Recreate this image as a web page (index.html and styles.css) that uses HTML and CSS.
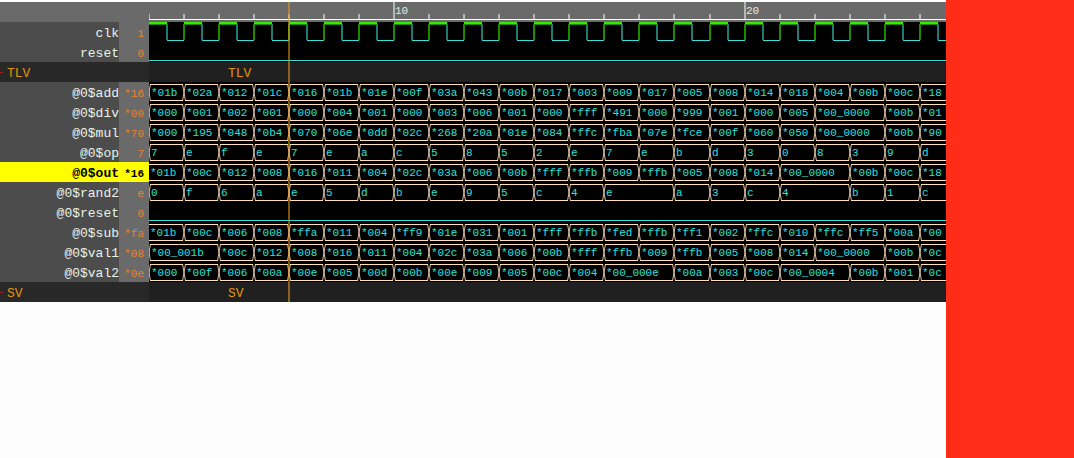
FILE: index.html
```html
<!DOCTYPE html>
<html lang="en">
<head>
<meta charset="utf-8">
<title>Waveform viewer</title>
<link rel="stylesheet" href="styles.css">
</head>
<body>
<main class="viewer">
  <section class="panel" id="panel">
    <div class="row row-scale">
      <div class="corner"></div>
      <div class="wave" id="scale"></div>
    </div>
  </section>
</main>
<aside class="side"></aside>
<script src="waves.js"></script>
</body>
</html>
```

FILE: styles.css
```css
body {
  margin: 0;
  min-height: 100vh;
  display: flex;
  background: #fdfdfd;
  font-family: "Courier New", "Liberation Mono", monospace;
}

.viewer {
  flex: 1;
  min-width: 0;
  padding-top: 2px;
}

.side {
  flex: 0 0 128px;
  background: #ff2c18;
}

.panel {
  position: relative;
  overflow: hidden;
}

.row {
  display: flex;
  height: 20px;
  line-height: 24px;
  white-space: pre;
}

.corner {
  flex: 0 0 149px;
}

.row-scale {
  background: #6a6a6a;
}

.name {
  flex: 0 0 119px;
  height: 20px;
  background: #4c4c4c;
  color: #e8f4e8;
  font-size: 13px;
  text-align: right;
}

.value {
  flex: 0 0 25px;
  height: 20px;
  padding-right: 5px;
  background: #6a6a6a;
  color: #e8832a;
  font-size: 11px;
  text-align: right;
}

.selected .name,
.selected .value {
  background: #ffff00;
  color: #000000;
  font-weight: bold;
}

.wave {
  flex: 1;
  min-width: 0;
  background: #000000;
}

.row-scale .wave {
  background: #6a6a6a;
}

.wave svg {
  display: block;
  width: 100%;
  height: 20px;
}

.group {
  color: #e3940f;
  font-size: 13px;
}

.group-name {
  flex: 0 0 149px;
  display: flex;
  gap: 4px;
  background: #282828;
}

.group-name::before {
  content: "";
  width: 3px;
  height: 1px;
  margin-top: 10px;
  background: #a01c1c;
}

.group-wave {
  flex: 1;
  padding-left: 79px;
  background: #202020;
}

.cursor {
  position: absolute;
  top: 0;
  bottom: 0;
  left: 288px;
  width: 2px;
  background: #e39a20;
  opacity: 0.55;
}

.tick {
  stroke: #b0b8b0;
  stroke-width: 2;
}

.axis {
  stroke: #ffffff;
}

.scale-text {
  fill: #e0ece0;
  font-size: 11px;
}

.clk-high {
  stroke: #35e805;
  stroke-width: 2;
}

.clk-shade {
  stroke: #1f8a00;
}

.clk-rise {
  stroke: #1f8a00;
  stroke-width: 2;
}

.clk-fall {
  stroke: #227873;
  stroke-width: 2;
}

.low {
  stroke: #35e0d8;
}

.bus,
.cross {
  fill: none;
  stroke: #ffdfba;
}

.cross {
  opacity: 0.85;
}

.bus-text {
  fill: #2ce0dc;
  font-size: 11px;
}
```

FILE: waves.js
```js
const CYCLES = 23;

// One cycle is slightly over 35px, so later edges carry the rounding.
const edge = (i) => 35 * i + (i >= 16 ? 1 : 0);

// "value:n" holds a value for n cycles; open rows continue from before the view.
const signals = [
  { name: "clk", value: "1", type: "clk" },
  { name: "reset", value: "0", type: "low" },
  { group: "TLV" },
  { name: "@0$add", value: "*16", bus: "*01b *02a *012 *01c *016 *01b *01e *00f *03a *043 *00b *017 *003 *009 *017 *005 *008 *014 *018 *004 *00b *00c *18" },
  { name: "@0$div", value: "*00", bus: "*000 *001 *002 *001 *000 *004 *001 *000 *003 *006 *001 *000 *fff *491 *000 *999 *001 *000 *005 *00_0000:2 *00b *01" },
  { name: "@0$mul", value: "*70", bus: "*000 *195 *048 *0b4 *070 *06e *0dd *02c *268 *20a *01e *084 *ffc *fba *07e *fce *00f *060 *050 *00_0000:2 *00b *90" },
  { name: "@0$op", value: "7", bus: "7 e f e 7 e a c 5 8 5 2 e 7 e b d 3 0 8 3 9 d" },
  { name: "@0$out", value: "*16", selected: true, open: true, bus: "*01b *00c *012 *008 *016 *011 *004 *02c *03a *006 *00b *fff *ffb *009 *ffb *005 *008 *014 *00_0000:2 *00b *00c *18" },
  { name: "@0$rand2", value: "e", bus: "0 f 6 a e 5 d b e 9 5 c 4 e:2 a 3 c 4:2 b 1 c" },
  { name: "@0$reset", value: "0", type: "low" },
  { name: "@0$sub", value: "*fa", open: true, bus: "*01b *00c *006 *008 *ffa *011 *004 *ff9 *01e *031 *001 *fff *ffb *fed *ffb *ff1 *002 *ffc *010 *ffc *ff5 *00a *00" },
  { name: "@0$val1", value: "*08", bus: "*00_001b:2 *00c *012 *008 *016 *011 *004 *02c *03a *006 *00b *fff *ffb *009 *ffb *005 *008 *014 *00_0000:2 *00b *0c" },
  { name: "@0$val2", value: "*0e", bus: "*000 *00f *006 *00a *00e *005 *00d *00b *00e *009 *005 *00c *004 *00_000e:2 *00a *003 *00c *00_0004:2 *00b *001 *0c" },
  { group: "SV" }
];

const path = (cls, d) => `<path class="${cls}" d="${d}"/>`;

function drawScale() {
  let out = "";
  for (let i = 0; i < CYCLES; i++) {
    const major = i === 7 || i === 17;
    out += path("tick", `M${edge(i)} ${major ? 0 : 12}V17`);
    if (major) {
      out += `<text class="scale-text" x="${edge(i) + 1}" y="12">${i + 3}</text>`;
    }
  }
  return out + path("axis", "M0 17.5H4000");
}

function drawClock() {
  let out = "";
  for (let i = 0; i < CYCLES; i++) {
    const a = edge(i);
    const b = edge(i + 1);
    const m = a + 18;
    out += path("low", `M${m} 18.5H${b}`);
    out += path("clk-fall", `M${m} 2V18`);
    if (i > 0) out += path("clk-rise", `M${a} 2V18`);
    out += path("clk-high", `M${a} 1H${m}`) + path("clk-shade", `M${a} 2.5H${m}`);
  }
  return out;
}

function drawBus(signal) {
  let at = 0;
  let out = "";
  for (const item of signal.bus.split(" ")) {
    const [text, span] = item.split(":");
    const a = edge(at);
    const last = at + Number(span || 1) >= CYCLES;
    at += Number(span || 1);
    const b = last ? 4000 : edge(at);
    const open = signal.open && a === 0;
    const start = open ? 0 : a + 1;
    out += path("bus", `M${start} 2.5H${b - 1}M${start} 18.5H${b - 1}`);
    if (!open) out += path("cross", `M${a - 1.5} 2L${a + 1.5} 19M${a + 1.5} 2L${a - 1.5} 19`);
    out += `<text class="bus-text" x="${a + (open ? 1 : 2)}" y="14">${text}</text>`;
  }
  return out;
}

function drawWave(signal) {
  if (signal.type === "clk") return drawClock();
  if (signal.type === "low") return path("low", "M0 18.5H4000");
  return drawBus(signal);
}

document.getElementById("scale").innerHTML = `<svg>${drawScale()}</svg>`;

const rows = signals.map((s) => s.group
  ? `<div class="row group"><div class="group-name">${s.group}</div><div class="group-wave">${s.group}</div></div>`
  : `<div class="row${s.selected ? " selected" : ""}"><div class="name">${s.name}</div><div class="value">${s.value}</div><div class="wave"><svg>${drawWave(s)}</svg></div></div>`
).join("");

document.getElementById("panel").insertAdjacentHTML("beforeend", rows + '<div class="cursor"></div>');
```
